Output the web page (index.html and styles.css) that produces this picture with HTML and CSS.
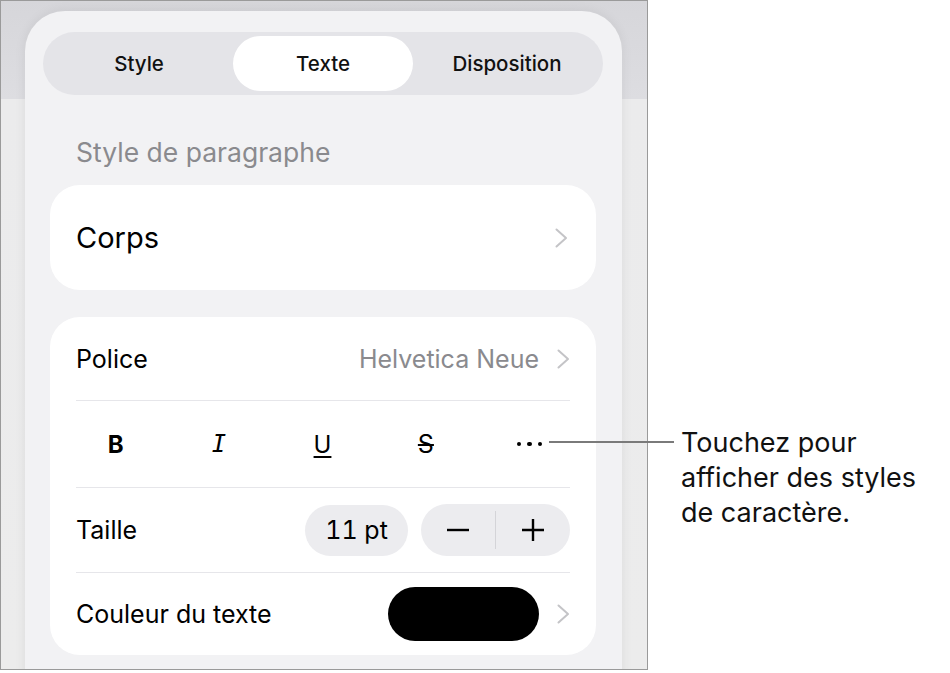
FILE: index.html
```html
<!DOCTYPE html>
<html lang="fr">
<head>
    <meta charset="UTF-8">
    <meta name="viewport" content="width=device-width, initial-scale=1.0">
    <title>Texte</title>
    <link rel="stylesheet" href="styles.css">
</head>
<body>
<div class="page">

    <!-- Screenshot frame -->
    <div class="shot">
        <div class="panel">

            <div class="tabs">
                <div class="tab">Style</div>
                <div class="tab active">Texte</div>
                <div class="tab">Disposition</div>
            </div>

            <div class="section-title">Style de paragraphe</div>

            <div class="card card-single">
                <div class="row row-corps">
                    <span class="corps">Corps</span>
                    <svg class="chevron" viewBox="0 0 13 20"><path d="M1.5 1.5 L11 10 L1.5 18.5"/></svg>
                </div>
            </div>

            <div class="card">
                <div class="row row-police">
                    <span class="label">Police</span>
                    <span class="value">Helvetica Neue</span>
                    <svg class="chevron" viewBox="0 0 13 20"><path d="M1.5 1.5 L11 10 L1.5 18.5"/></svg>
                </div>
                <div class="row row-format">
                    <div class="format">
                        <span class="fmt fmt-b">B</span>
                        <span class="fmt fmt-i">I</span>
                        <span class="fmt fmt-u">U</span>
                        <span class="fmt fmt-s">S</span>
                        <span class="fmt fmt-more"><i></i><i></i><i></i></span>
                    </div>
                </div>
                <div class="row row-size">
                    <span class="label">Taille</span>
                    <span class="size-pill">11 pt</span>
                    <div class="stepper">
                        <span class="step">
                            <svg viewBox="0 0 22 22"><path d="M0 11 H22"/></svg>
                        </span>
                        <span class="step-sep"></span>
                        <span class="step">
                            <svg viewBox="0 0 22 22"><path d="M0 11 H22 M11 0 V22"/></svg>
                        </span>
                    </div>
                </div>
                <div class="row row-color">
                    <span class="label">Couleur du texte</span>
                    <span class="swatch"></span>
                    <svg class="chevron" viewBox="0 0 13 20"><path d="M1.5 1.5 L11 10 L1.5 18.5"/></svg>
                </div>
            </div>

        </div>
    </div>

    <!-- Callout -->
    <div class="callout">
        <span class="callout-line"></span>
        <p class="callout-text">Touchez pour<br>afficher des styles<br>de caractère.</p>
    </div>

</div>
</body>
</html>
```

FILE: styles.css
```css
body, html {
    margin: 0;
    padding: 0;
    background: #fff;
    font-family: Inter, "Noto Sans", sans-serif;
    color: #000;
}
.page {
    position: relative;
    width: 950px;
    height: 673px;
}
/* Screenshot frame */
.shot {
    box-sizing: border-box;
    width: 648px;
    height: 670px;
    border: 1px solid #9a9a9a;
    padding: 10px 25px 0 24px;
    overflow: hidden;
    background: linear-gradient(to bottom, #d6d6da 0, #dddde1 98px, #ebebec 98px, #ececec 100%);
}
.panel {
    height: 100%;
    background: #f2f2f4;
    border-radius: 40px 40px 0 0;
    padding: 21px 19px 0 18px;
    box-shadow: 0 0 12px rgba(0, 0, 0, 0.07);
}
/* Segmented control */
.tabs {
    display: grid;
    grid-template-columns: repeat(3, 1fr);
    height: 63px;
    box-sizing: border-box;
    padding: 4px;
    background: #e4e4e8;
    border-radius: 32px;
}
.tab {
    display: flex;
    align-items: center;
    justify-content: center;
    font-size: 20.5px;
    font-weight: 500;
    color: #111;
    border-radius: 28px;
    margin: 0 2px;
}
.tab.active {
    background: #fff;
}
.section-title {
    margin: 43px 0 19px 33px;
    font-size: 26.5px;
    line-height: 28px;
    color: #8a8a8e;
}
/* Cards */
.card {
    margin: 0 7px 27px 7px;
    background: #fff;
    border-radius: 30px;
    padding: 0 26px;
}
.row {
    display: flex;
    align-items: center;
    border-bottom: 1px solid #e6e6ea;
}
.row:last-child {
    border-bottom: none;
}
.row-corps {
    height: 105px;
    padding-right: 2px;
}
.corps {
    font-size: 29px;
    flex: 1;
}
.label {
    font-size: 25px;
    flex: 1;
}
.chevron {
    width: 13px;
    height: 20px;
    fill: none;
    stroke: #c4c4c7;
    stroke-width: 2;
    stroke-linecap: round;
    stroke-linejoin: round;
}
.row-police {
    height: 83px;
}
.value {
    font-size: 25px;
    color: #8a8a8e;
    margin-right: 18px;
}
/* B I U S ... */
.row-format {
    height: 86px;
}
.format {
    flex: 1;
    display: grid;
    grid-template-columns: repeat(5, 1fr);
    margin: 0 -11px 0 -12px;
}
.fmt {
    display: flex;
    justify-content: center;
    align-items: center;
    font-size: 24px;
    height: 30px;
}
.fmt-b {
    font-weight: 700;
}
.fmt-i {
    font-family: "DejaVu Sans Mono", monospace;
    font-style: italic;
    font-size: 24px;
}
.fmt-u {
    text-decoration: underline;
    text-decoration-thickness: 2px;
    text-underline-offset: 3px;
}
.fmt-s {
    font-size: 25px;
    text-decoration: line-through;
    text-decoration-thickness: 2px;
}
.fmt-more {
    gap: 6px;
}
.fmt-more i {
    width: 4.5px;
    height: 4.5px;
    border-radius: 50%;
    background: #000;
}
/* Taille */
.row-size {
    height: 84px;
}
.size-pill {
    width: 103px;
    height: 51px;
    border-radius: 26px;
    background: #ececef;
    font-size: 25px;
    font-variant-numeric: tabular-nums;
    display: flex;
    align-items: center;
    justify-content: center;
    margin-right: 13px;
}
.stepper {
    display: flex;
    align-items: center;
    width: 149px;
    height: 52px;
    border-radius: 26px;
    background: #ececef;
}
.step {
    flex: 1;
    display: flex;
    justify-content: center;
}
.step svg {
    width: 22px;
    height: 22px;
    fill: none;
    stroke: #000;
    stroke-width: 2.4;
}
.step-sep {
    width: 1px;
    height: 38px;
    background: #d4d4d8;
}
/* Couleur */
.row-color {
    height: 82px;
}
.swatch {
    width: 151px;
    height: 54px;
    border-radius: 27px;
    background: #000;
    margin-right: 18px;
}
/* Callout over the frame edge */
.callout {
    position: absolute;
    left: 549px;
    top: 425px;
    display: flex;
    align-items: flex-start;
    gap: 7px;
}
.callout-line {
    width: 125px;
    height: 2px;
    margin-top: 16px;
    background: #7a7a7a;
}
.callout-text {
    margin: 0;
    font-size: 27px;
    line-height: 35px;
    color: #111;
}
```
